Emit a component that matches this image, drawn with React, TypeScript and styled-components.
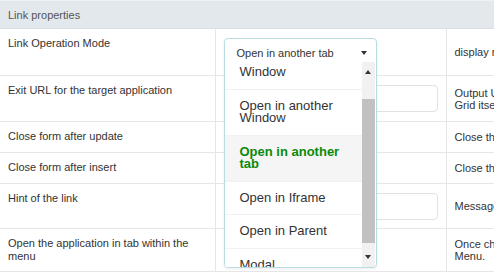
import React, { useLayoutEffect, useRef } from 'react';
import styled, { createGlobalStyle } from 'styled-components';

const GlobalStyle = createGlobalStyle`
  html, body {
    margin: 0;
    padding: 0;
    background: #ffffff;
    overflow: hidden;
  }
  body {
    font-family: "Liberation Sans", Arial, sans-serif;
  }
`;

interface PropRow {
  label: string;
  kind: 'select' | 'input' | 'none';
  help: string;
  height: number;
}

const rows: PropRow[] = [
  { label: 'Link Operation Mode', kind: 'select', help: 'display mode of the link', height: 47 },
  {
    label: 'Exit URL for the target application',
    kind: 'input',
    help: 'Output URL of the target application. If empty, the\nGrid itself is used.',
    height: 46,
  },
  { label: 'Close form after update', kind: 'none', help: 'Close the form after update', height: 31 },
  { label: 'Close form after insert', kind: 'none', help: 'Close the form after insert', height: 31 },
  { label: 'Hint of the link', kind: 'input', help: 'Message displayed when hovering the link', height: 45 },
  {
    label: 'Open the application in tab within the menu',
    kind: 'none',
    help: 'Once checked, the application opens in a tab within the\nMenu.',
    height: 43,
  },
];

const options = [
  { label: 'Window' },
  { label: 'Open in another Window' },
  { label: 'Open in another tab', selected: true },
  { label: 'Open in Iframe' },
  { label: 'Open in Parent' },
  { label: 'Modal' },
];

const Page = styled.div`
  width: 760px;
`;

const Table = styled.table`
  width: 760px;
  table-layout: fixed;
  border-collapse: collapse;
  font-size: 11px;
  color: #333333;
`;

const HeaderRow = styled.tr`
  height: 28px;
`;

const HeaderCell = styled.td`
  background: #e3e8ed;
  border-top: 1px solid #eef1f4;
  border-bottom: 1px solid #d9dfe5;
  color: #555555;
  padding: 0 8px;
  vertical-align: middle;
`;

const Row = styled.tr<{ $h: number }>`
  height: ${(p) => p.$h}px;
`;

const LabelCell = styled.td`
  border: 1px solid #e6e6e6;
  border-left: none;
  padding: 8px 8px;
  vertical-align: top;
  line-height: 13px;
`;

const FieldCell = styled.td<{ $top?: boolean }>`
  border: 1px solid #e6e6e6;
  padding: ${(p) => (p.$top ? '9px 8px 0' : '0 8px')};
  vertical-align: ${(p) => (p.$top ? 'top' : 'middle')};
`;

const HelpCell = styled.td`
  border: 1px solid #e6e6e6;
  padding: 0 8px;
  vertical-align: middle;
  white-space: pre;
  line-height: 12px;
  overflow: hidden;
`;

const TextInput = styled.div`
  box-sizing: border-box;
  width: 214px;
  height: 27px;
  border: 1px solid #e2e2e2;
  border-radius: 4px;
  background: #ffffff;
`;

const SelectAnchor = styled.div`
  position: relative;
  width: 153px;
  height: 27px;
`;

const Popup = styled.div`
  position: absolute;
  top: 0;
  left: 0;
  z-index: 5;
  box-sizing: border-box;
  width: 153px;
  height: 230px;
  border: 1px solid #b7dde3;
  border-radius: 4px;
  background: #ffffff;
  box-shadow: 0 1px 3px rgba(0, 0, 0, 0.08);
  display: flex;
  flex-direction: column;
  overflow: hidden;
`;

const SelectHead = styled.div`
  height: 23px;
  flex: none;
  display: flex;
  align-items: center;
  justify-content: space-between;
  padding: 4px 9px 0 12px;
  box-sizing: border-box;
  font-size: 11px;
  color: #333333;
`;

const Caret = styled.span<{ $up?: boolean }>`
  width: 0;
  height: 0;
  border-left: 3.5px solid transparent;
  border-right: 3.5px solid transparent;
  ${(p) => (p.$up ? 'border-bottom: 4px solid #333;' : 'border-top: 4px solid #333;')}
`;

const ListArea = styled.div`
  flex: 1;
  display: flex;
  min-height: 0;
`;

const Viewport = styled.div`
  flex: 1;
  overflow: hidden;
`;

const Option = styled.div<{ $selected?: boolean }>`
  padding: 10px 15px;
  font-size: 13px;
  line-height: 12.5px;
  color: ${(p) => (p.$selected ? '#0a8a0a' : '#333333')};
  font-weight: ${(p) => (p.$selected ? 'bold' : 'normal')};
  background: ${(p) => (p.$selected ? '#f5f5f5' : '#ffffff')};
  border-bottom: 1px solid #f1f1f1;
`;

const ScrollTrack = styled.div`
  width: 13px;
  flex: none;
  background: #f1f1f1;
  display: flex;
  flex-direction: column;
  margin-right: 1px;
`;

const ArrowBtn = styled.div`
  height: 20px;
  flex: none;
  display: flex;
  align-items: center;
  justify-content: center;
`;

const Rail = styled.div`
  flex: 1;
  padding-top: 17px;
`;

const Thumb = styled.div`
  height: 144px;
  background: #c1c1c1;
`;

function OpenSelect() {
  const viewRef = useRef<HTMLDivElement>(null);

  useLayoutEffect(() => {
    if (viewRef.current) viewRef.current.scrollTop = 6;
  }, []);

  return (
    <SelectAnchor>
      <Popup>
        <SelectHead>
          <span>Open in another tab</span>
          <Caret />
        </SelectHead>
        <ListArea>
          <Viewport ref={viewRef}>
            {options.map((o) => (
              <Option key={o.label} $selected={o.selected}>
                {o.label}
              </Option>
            ))}
          </Viewport>
          <ScrollTrack>
            <ArrowBtn>
              <Caret $up />
            </ArrowBtn>
            <Rail>
              <Thumb />
            </Rail>
            <ArrowBtn>
              <Caret />
            </ArrowBtn>
          </ScrollTrack>
        </ListArea>
      </Popup>
    </SelectAnchor>
  );
}

export default function App() {
  return (
    <Page>
      <GlobalStyle />
      <Table>
        <colgroup>
          <col style={{ width: 215 }} />
          <col style={{ width: 231 }} />
          <col />
        </colgroup>
        <tbody>
          <HeaderRow>
            <HeaderCell colSpan={3}>Link properties</HeaderCell>
          </HeaderRow>
          {rows.map((r) => (
            <Row key={r.label} $h={r.height}>
              <LabelCell>{r.label}</LabelCell>
              <FieldCell $top={r.kind === 'select'}>
                {r.kind === 'select' && <OpenSelect />}
                {r.kind === 'input' && <TextInput />}
              </FieldCell>
              <HelpCell>{r.help}</HelpCell>
            </Row>
          ))}
        </tbody>
      </Table>
    </Page>
  );
}
